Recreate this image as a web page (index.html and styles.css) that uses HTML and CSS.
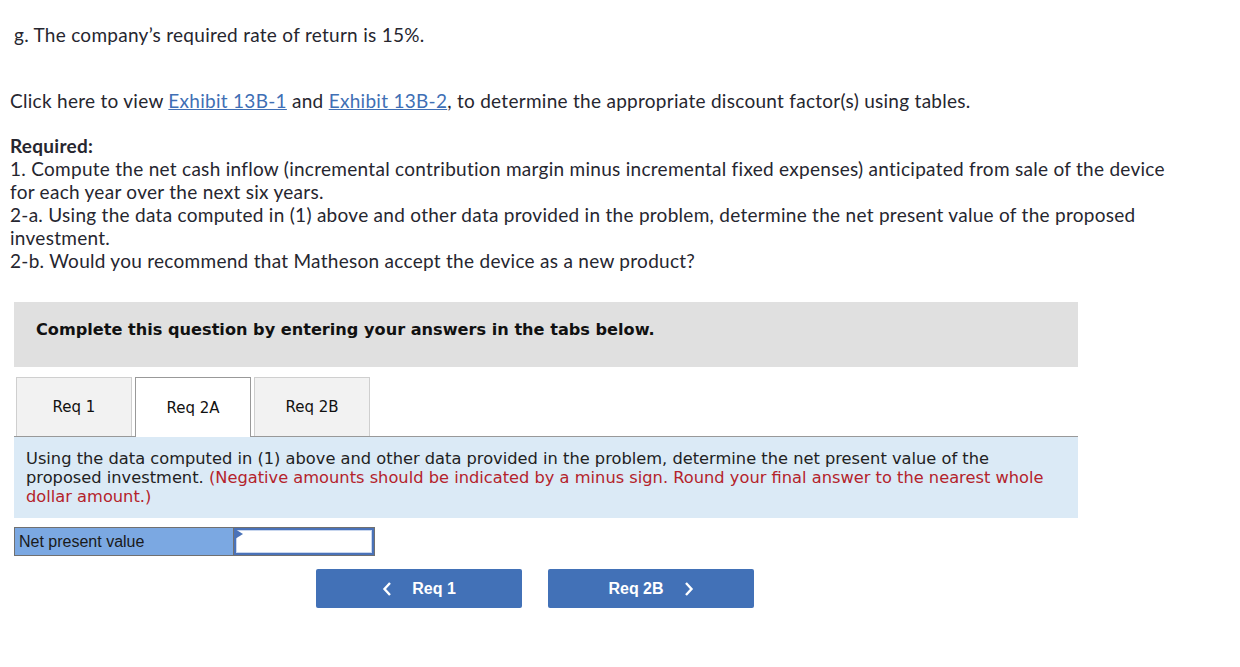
FILE: index.html
```html
<!DOCTYPE html>
<html>
<head>
<meta charset="utf-8">
<link rel="stylesheet" href="styles.css">
</head>
<body>
<div class="page">
  <p class="item-g">g. The company’s required rate of return is 15%.</p>
  <p class="click">Click here to view <a href="#">Exhibit 13B-1</a> and <a href="#">Exhibit 13B-2</a>, to determine the appropriate discount factor(s) using tables.</p>
  <div class="required">
    <strong>Required:</strong><br>
    1. Compute the net cash inflow (incremental contribution margin minus incremental fixed expenses) anticipated from sale of the device for each year over the next six years.<br>
    2-a. Using the data computed in (1) above and other data provided in the problem, determine the net present value of the proposed investment.<br>
    2-b. Would you recommend that Matheson accept the device as a new product?
  </div>

  <div class="question">
    <div class="banner">Complete this question by entering your answers in the tabs below.</div>
    <div class="tabs">
      <div class="tab">Req 1</div>
      <div class="tab active">Req 2A</div>
      <div class="tab">Req 2B</div>
    </div>
    <div class="instructions">
      Using the data computed in (1) above and other data provided in the problem, determine the net present value of the proposed investment. <span class="hint">(Negative amounts should be indicated by a minus sign. Round your final answer to the nearest whole dollar amount.)</span>
    </div>
    <div class="answer">
      <div class="label">Net present value</div>
      <div class="input-cell"><span class="marker"></span></div>
    </div>
    <div class="nav">
      <button class="btn"><svg class="chev" viewBox="0 0 10 16" width="10" height="16"><path d="M8 2 L2.5 8 L8 14" fill="none" stroke="#fff" stroke-width="2.4"/></svg><span>Req 1</span></button>
      <button class="btn"><span>Req 2B</span><svg class="chev" viewBox="0 0 10 16" width="10" height="16"><path d="M2 2 L7.5 8 L2 14" fill="none" stroke="#fff" stroke-width="2.4"/></svg></button>
    </div>
  </div>
</div>
</body>
</html>
```
FILE: styles.css
```css
html, body {
  margin: 0;
  padding: 0;
  background: #fff;
}
.page {
  padding: 0 0 0 10px;
  width: 1168px;
  font-family: Lato, "Open Sans", sans-serif;
  font-size: 19px;
  letter-spacing: 0.28px;
  line-height: 23px;
  color: #26262f;
}
.item-g {
  margin: 23px 0 0 4px;
}
.click {
  margin: 43px 0 0 0;
}
.click a {
  color: #3f6fb5;
  text-decoration: underline;
}
.required {
  margin-top: 22px;
}
.required strong {
  font-weight: 700;
}
.question {
  margin-top: 30px;
  margin-left: 4px;
  width: 1064px;
  font-family: "DejaVu Sans", Verdana, sans-serif;
  letter-spacing: 0;
}
.banner {
  background: #e0e0e0;
  height: 65px;
  box-sizing: border-box;
  padding: 18px 0 0 22px;
  font-weight: bold;
  font-size: 16.15px;
  line-height: 20px;
  color: #111;
}
.tabs {
  display: flex;
  gap: 3px;
  margin-top: 10px;
  padding-left: 2px;
  border-bottom: 1px solid #999;
  height: 59px;
}
.tab {
  width: 116px;
  box-sizing: border-box;
  height: 59px;
  padding-top: 1px;
  border: 1px solid #cfcfcf;
  border-bottom: none;
  background: #f2f2f2;
  display: flex;
  align-items: center;
  justify-content: center;
  font-size: 15px;
  color: #111;
}
.tab.active {
  background: #fff;
  border-color: #999;
  height: 60px;
}
.instructions {
  background: #dbeaf6;
  padding: 12px 24px 12px 12px;
  font-size: 16.25px;
  line-height: 19px;
  color: #222;
  height: 81px;
  box-sizing: border-box;
}
.hint {
  color: #b4232b;
}
.answer {
  margin-top: 9px;
  display: flex;
  width: 361px;
  height: 29px;
  box-sizing: border-box;
  border: 1px solid #707070;
  font-family: "Liberation Sans", Arial, sans-serif;
  font-size: 16px;
}
.label {
  width: 219px;
  background: #7ba8e2;
  border-right: 1px solid #707070;
  padding-left: 4px;
  line-height: 27px;
  color: #1a1a1a;
  box-sizing: border-box;
}
.input-cell {
  flex: 1;
  position: relative;
  border: 2px solid #4a72b8;
  background: #fff;
  box-shadow: inset 0 0 0 1px #c8d6ee;
}
.marker {
  position: absolute;
  left: -1px;
  top: -1px;
  width: 0;
  height: 0;
  border-top: 5px solid transparent;
  border-bottom: 5px solid transparent;
  border-left: 8px solid #4a72b8;
}
.nav {
  display: flex;
  gap: 26px;
  margin-top: 13px;
  margin-left: 302px;
}
.btn {
  width: 206px;
  height: 39px;
  background: #4271b7;
  border: none;
  border-radius: 2px;
  color: #fff;
  font-family: "Liberation Sans", Arial, sans-serif;
  font-weight: bold;
  font-size: 16px;
  display: flex;
  align-items: center;
  justify-content: center;
  gap: 20px;
  padding: 0;
}
```
